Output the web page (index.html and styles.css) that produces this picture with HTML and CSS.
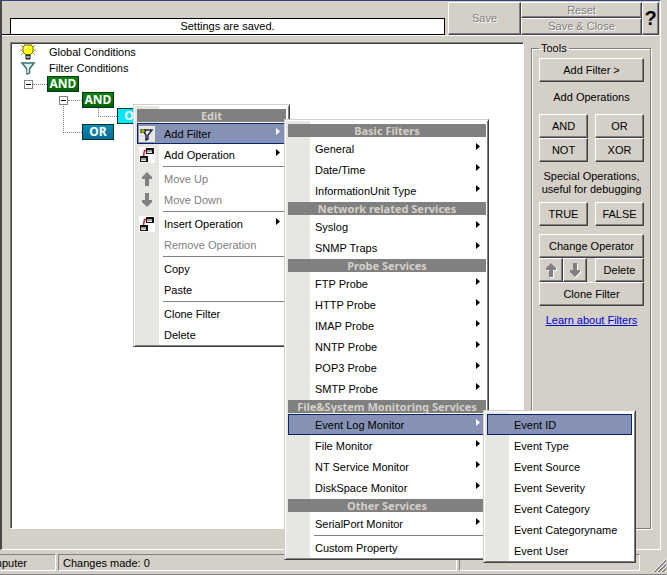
FILE: index.html
```html
<!DOCTYPE html>
<html lang="en">
<head>
    <meta charset="UTF-8">
    <meta name="viewport" content="width=device-width, initial-scale=1.0">
    <title>Filter Conditions</title>
    <link rel="stylesheet" href="styles.css">
</head>
<body>
    <svg class="defs" aria-hidden="true">
        <symbol id="arrow" viewBox="0 0 4 7"><path d="M0 0l4 3.500-4 3.500z" fill="currentColor"/></symbol>
        <symbol id="up" viewBox="0 0 12 16"><path d="M6 1l5 5v2H8v7H4V8H1V6z" fill="#808080"/></symbol>
        <symbol id="down" viewBox="0 0 12 16"><path d="M6 15l5-5V8H8V1H4v7H1v2z" fill="#808080"/></symbol>
        <symbol id="operation" viewBox="0 0 16 16">
            <path d="M0 0h16v16H0z" fill="#fff"/>
            <path d="M7 3.500H5.500L4.500 9" stroke="#d02030" stroke-width="1.500" fill="none"/>
            <path d="M7 1h8v6H7zM1 9h8v6H1z" fill="#111"/>
            <path d="M8 3h5v3H8zM2 11h5v3H2z" fill="#a8a4a4"/>
            <path d="M8 5.500h5M2 13.500h5" stroke="#e8e8e8"/>
        </symbol>
    </svg>

    <div class="window">
        <header class="topbar">
            <div class="message">Settings are saved.</div>
            <button class="btn save" disabled>Save</button>
            <div class="stack">
                <button class="btn" disabled>Reset</button>
                <button class="btn" disabled>Save &amp; Close</button>
            </div>
            <button class="btn help">?</button>
        </header>

        <main class="content">
            <section class="tree">
                <div class="tree-row">
                    <svg class="tree-icon" viewBox="0 0 16 16">
                        <path d="M1 1l2 2M15 1l-2 2M0 6h2M16 6h-2M1 11l2-2M15 11l-2-2M5 0v1M11 0v1" stroke="#a89020"/>
                        <path d="M5 1h6l2 2v5l-3 3H6L3 8V3z" fill="#ff0" stroke="#756d00"/>
                        <path d="M5 3l2-1v3H5z" fill="#fff"/>
                        <path d="M6 11h4v4H6z" fill="#777" stroke="#000"/>
                        <path d="M6 13h4" stroke="#ddd"/>
                    </svg>
                    <span>Global Conditions</span>
                </div>
                <div class="tree-row">
                    <svg class="tree-icon" viewBox="0 0 16 16">
                        <path d="M2 3h12L9.500 9v4L7 14V9z" fill="#d8f0ee" stroke="#387070" stroke-width="1.500"/>
                        <path d="M6 5l2 3v5" fill="none" stroke="#fff"/>
                    </svg>
                    <span>Filter Conditions</span>
                </div>
                <div class="tree-row level1"><span class="expander"></span><span class="op and">AND</span></div>
                <div class="tree-row level2"><span class="expander"></span><span class="op and">AND</span></div>
                <div class="tree-row level3"><span class="line"></span><span class="op selected">OR</span></div>
                <div class="tree-row level4"><span class="line"></span><span class="op or">OR</span></div>
            </section>

            <aside class="side">
                <fieldset class="tools">
                    <legend>Tools</legend>
                    <button class="btn">Add Filter &gt;</button>
                    <p class="caption">Add Operations</p>
                    <div class="pair">
                        <button class="btn">AND</button>
                        <button class="btn">OR</button>
                        <button class="btn">NOT</button>
                        <button class="btn">XOR</button>
                    </div>
                    <p class="caption note">Special Operations,<br>useful for debugging</p>
                    <div class="pair">
                        <button class="btn">TRUE</button>
                        <button class="btn">FALSE</button>
                    </div>
                    <div class="edit">
                        <button class="btn">Change Operator</button>
                        <div class="edit-row">
                            <button class="btn" aria-label="Move up" disabled><svg class="move"><use href="#up"/></svg></button>
                            <button class="btn" aria-label="Move down" disabled><svg class="move"><use href="#down"/></svg></button>
                            <button class="btn delete">Delete</button>
                        </div>
                        <button class="btn">Clone Filter</button>
                    </div>
                    <a class="learn" href="#">Learn about Filters</a>
                </fieldset>
            </aside>
        </main>
    </div>

    <footer class="status">
        <div class="cell computer"><span>Computer</span></div>
        <div class="cell changes">Changes made: 0</div>
        <div class="cell last"></div>
        <svg class="grip" viewBox="0 0 14 14">
            <path d="M2 14L14 2M6 14l8-8M10 14l4-4" stroke="#808080" stroke-width="2"/>
            <path d="M1 14L14 1M5 14l9-9M9 14l5-5" stroke="#fff"/>
        </svg>
    </footer>

    <div class="menu edit-menu">
        <h2>Edit</h2>
        <button class="item active">
            <svg class="item-icon" viewBox="0 0 16 16">
                <path d="M0 0h16v16H0z" fill="#e8e6e0"/>
                <path d="M5 4h8l-4 5v4l-2 1V9L5 6z" fill="#eef" stroke="#222a40" stroke-width="1.500"/>
                <path d="M1 5h6M4 3v4" stroke="#222" stroke-width="3"/>
                <path d="M1 5h5M4 3v4" stroke="#dde500"/>
            </svg>
            Add Filter<svg class="arrow"><use href="#arrow"/></svg>
        </button>
        <button class="item"><svg class="item-icon"><use href="#operation"/></svg>Add Operation<svg class="arrow"><use href="#arrow"/></svg></button>
        <hr>
        <button class="item" disabled><svg class="item-icon"><use href="#up"/></svg>Move Up</button>
        <button class="item" disabled><svg class="item-icon"><use href="#down"/></svg>Move Down</button>
        <hr>
        <button class="item"><svg class="item-icon"><use href="#operation"/></svg>Insert Operation<svg class="arrow"><use href="#arrow"/></svg></button>
        <button class="item" disabled>Remove Operation</button>
        <hr>
        <button class="item">Copy</button>
        <button class="item">Paste</button>
        <hr>
        <button class="item">Clone Filter</button>
        <button class="item">Delete</button>
    </div>

    <div class="menu filter-menu">
        <h2>Basic Filters</h2>
        <button class="item">General<svg class="arrow"><use href="#arrow"/></svg></button>
        <button class="item">Date/Time<svg class="arrow"><use href="#arrow"/></svg></button>
        <button class="item">InformationUnit Type<svg class="arrow"><use href="#arrow"/></svg></button>
        <h2>Network related Services</h2>
        <button class="item">Syslog<svg class="arrow"><use href="#arrow"/></svg></button>
        <button class="item">SNMP Traps<svg class="arrow"><use href="#arrow"/></svg></button>
        <h2>Probe Services</h2>
        <button class="item">FTP Probe<svg class="arrow"><use href="#arrow"/></svg></button>
        <button class="item">HTTP Probe<svg class="arrow"><use href="#arrow"/></svg></button>
        <button class="item">IMAP Probe<svg class="arrow"><use href="#arrow"/></svg></button>
        <button class="item">NNTP Probe<svg class="arrow"><use href="#arrow"/></svg></button>
        <button class="item">POP3 Probe<svg class="arrow"><use href="#arrow"/></svg></button>
        <button class="item">SMTP Probe<svg class="arrow"><use href="#arrow"/></svg></button>
        <h2>File&amp;System Monitoring Services</h2>
        <button class="item active">Event Log Monitor<svg class="arrow"><use href="#arrow"/></svg></button>
        <button class="item">File Monitor<svg class="arrow"><use href="#arrow"/></svg></button>
        <button class="item">NT Service Monitor<svg class="arrow"><use href="#arrow"/></svg></button>
        <button class="item">DiskSpace Monitor<svg class="arrow"><use href="#arrow"/></svg></button>
        <h2>Other Services</h2>
        <button class="item">SerialPort Monitor<svg class="arrow"><use href="#arrow"/></svg></button>
        <hr>
        <button class="item">Custom Property</button>
    </div>

    <div class="menu event-menu">
        <button class="item active">Event ID</button>
        <button class="item">Event Type</button>
        <button class="item">Event Source</button>
        <button class="item">Event Severity</button>
        <button class="item">Event Category</button>
        <button class="item">Event Categoryname</button>
        <button class="item">Event User</button>
    </div>
</body>
</html>
```

FILE: styles.css
```css
* {
    box-sizing: border-box;
}

body {
    margin: 0;
    min-height: 100vh;
    display: flex;
    flex-direction: column;
    position: relative;
    overflow: hidden;
    background: #d4d0c8;
    color: #000;
    font-family: "Liberation Sans", Arial, sans-serif;
    font-size: 11px;
    line-height: 13px;
}

button {
    font: inherit;
    color: inherit;
}

.defs {
    position: absolute;
    width: 0;
    height: 0;
}

.window {
    flex: 1;
    display: flex;
    flex-direction: column;
    margin-right: 6px;
    border-top: 1px solid #35457c;
    border-left: 2px solid #484848;
    border-right: 1px solid #fff;
    border-bottom: 1px solid #fff;
}

/* Buttons */
.btn {
    display: flex;
    align-items: center;
    justify-content: center;
    min-width: 0;
    padding: 0;
    background: #d4d0c8;
    border: 1px solid;
    border-color: #fff #404040 #404040 #fff;
    box-shadow: inset -1px -1px #808080;
}

.btn:disabled {
    color: #808080;
    text-shadow: 1px 1px #fff;
}

/* Top bar */
.topbar {
    display: flex;
    align-items: flex-end;
    height: 35px;
    padding: 1px 1px 0 8px;
    border-bottom: 1px solid #fff;
    background: linear-gradient(#000, #000) left bottom / calc(100% - 215px) 1px no-repeat;
}

.message {
    flex: 1;
    height: 17px;
    margin-right: 3px;
    border: 1px solid #000;
    background: #fff;
    line-height: 15px;
    text-align: center;
}

.save {
    width: 73px;
    height: 33px;
}

.stack {
    display: grid;
    grid-template-rows: 16px 17px;
    width: 121px;
}

.help {
    width: 17px;
    height: 33px;
    font-size: 20px;
    font-weight: bold;
}

/* Filter tree */
.content {
    flex: 1;
    display: flex;
    padding: 6px 9px 20px 8px;
}

.tree {
    flex: 1;
    padding-top: 1px;
    border: 1px solid;
    border-color: #808080 #fff #fff #808080;
    box-shadow: inset 1px 1px #404040;
    background: #fff;
}

.tree-row {
    display: flex;
    align-items: center;
    height: 16px;
}

.tree-icon {
    width: 16px;
    height: 16px;
    margin: 0 13px 0 9px;
}

.level1 {
    padding-left: 13px;
}

.level2 {
    padding-left: 48px;
}

.level3 {
    padding-left: 87px;
}

.level4 {
    padding-left: 52px;
}

.expander {
    width: 9px;
    height: 9px;
    margin-right: 14px;
    border: 1px solid #808080;
    background: linear-gradient(#000, #000) center / 5px 1px no-repeat;
    position: relative;
}

.expander::after {
    content: "";
    position: absolute;
    left: 8px;
    top: 3px;
    width: 14px;
    border-top: 1px dotted #808080;
}

.line {
    align-self: flex-start;
    width: 19px;
    height: 9px;
    border-left: 1px dotted #808080;
    border-bottom: 1px dotted #808080;
}

.level4 .line {
    height: 29px;
    margin-top: -20px;
}

.op {
    width: 32px;
    height: 16px;
    border: 1px solid #032;
    color: #fff;
    font: bold 12px/14px "Noto Sans", sans-serif;
    text-align: center;
}

.and {
    background: linear-gradient(#0a860a, #046004);
}

.or {
    background: linear-gradient(#0a8ab5, #086c94);
}

.selected {
    background: #00e8f8;
}

/* Tools */
.side {
    width: 127px;
    padding-left: 7px;
}

.tools {
    height: 100%;
    margin: 0;
    padding: 3px 6px 0 7px;
    border: 1px solid #808080;
    box-shadow: 1px 1px #fff, inset 1px 1px #fff;
}

.tools legend {
    padding: 0 2px;
}

.tools .btn {
    width: 100%;
    height: 24px;
}

.caption {
    margin: 9px 0 10px;
    text-align: center;
    white-space: nowrap;
}

.note {
    margin: 8px 0 6px;
}

.pair {
    display: grid;
    grid-template-columns: 1fr 1fr;
    column-gap: 7px;
}

.edit {
    margin: 8px 0;
}

.edit-row {
    display: grid;
    grid-template-columns: 24px 24px 1fr;
}

.edit-row .delete {
    width: auto;
    margin-left: 8px;
}

.move {
    width: 12px;
    height: 16px;
    filter: drop-shadow(1px 1px #fff);
}

.learn {
    display: block;
    color: #00c;
    text-align: center;
    white-space: nowrap;
}

/* Status bar */
.status {
    display: flex;
    gap: 2px;
    height: 25px;
    padding: 4px 1px 3px 0;
    border-bottom: 1px solid #808080;
}

.cell {
    padding: 2px 4px;
    border: 1px solid;
    border-color: #808080 #fff #fff #808080;
    white-space: nowrap;
}

.computer {
    display: flex;
    justify-content: flex-end;
    width: 56px;
    padding-right: 28px;
    border-left: 0;
    overflow: hidden;
}

.changes {
    flex: 1;
}

.last {
    width: 181px;
}

.grip {
    width: 14px;
    height: 14px;
    margin: 4px 0 0 10px;
}

/* Popup menus */
.menu {
    position: absolute;
    border: 1px solid;
    border-color: #d4d0c8 #404040 #404040 #d4d0c8;
    box-shadow: inset 1px 1px #fff, inset -1px -1px #808080;
    background: linear-gradient(90deg, #e7e6e2 25px, #fff 25px);
}

.menu h2 {
    margin: 1px 0;
    background: #808080;
    color: #d4d0c8;
    font-family: "Noto Sans", Tahoma, sans-serif;
    font-size: 11px;
    line-height: 13px;
    text-align: center;
    white-space: nowrap;
}

.menu hr {
    height: 1px;
    margin: 1px 0 1px 26px;
    border: 0;
    background: #808080;
}

.item {
    display: flex;
    align-items: center;
    position: relative;
    width: 100%;
    height: 21px;
    padding: 2px 0 0 26px;
    border: 1px solid transparent;
    background: none;
    text-align: left;
    white-space: nowrap;
}

.item:disabled {
    color: #808080;
}

.item.active {
    border-color: #0a246a;
    background: #8592b5;
}

.item-icon {
    position: absolute;
    left: 1px;
    top: 2px;
    width: 16px;
    height: 16px;
}

.arrow {
    width: 4px;
    height: 7px;
    margin: 0 5px 6px auto;
}

.active .arrow {
    color: #fff;
}

.edit-menu {
    left: 133px;
    top: 104px;
    width: 157px;
    padding: 3px 3px 1px;
}

.filter-menu {
    left: 284px;
    top: 119px;
    width: 205px;
    padding: 3px 2px 1px 3px;
}

.event-menu {
    left: 483px;
    top: 410px;
    width: 153px;
    padding: 3px 3px 1px;
}
```
